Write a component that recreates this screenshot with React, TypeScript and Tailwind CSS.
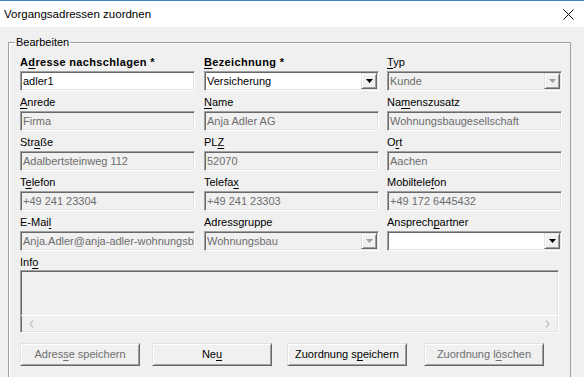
import React from 'react'

const sunken =
  'border border-t-[#a0a0a0] border-l-[#a0a0a0] border-r-white border-b-white shadow-[inset_1px_1px_0_#696969,inset_-1px_-1px_0_#e3e3e3]'
const raised =
  'border border-t-[#e3e3e3] border-l-[#e3e3e3] border-r-[#696969] border-b-[#696969] shadow-[inset_1px_1px_0_#ffffff,inset_-1px_-1px_0_#a0a0a0]'

type Label = { pre: string; acc?: string; post?: string; bold?: boolean }

function Caption({ pre, acc, post, bold }: Label) {
  return (
    <div className={`h-[13px] leading-[13px] whitespace-nowrap ${bold ? 'font-bold tracking-[0.35px]' : ''}`}>
      {pre}
      {acc && <span className="underline underline-offset-[2px]">{acc}</span>}
      {post}
    </div>
  )
}

function TextBox({ value, enabled }: { value: string; enabled?: boolean }) {
  return (
    <div
      className={`mt-[2px] h-[20px] w-[175px] ${sunken} flex items-center pl-[2px] overflow-hidden whitespace-nowrap ${
        enabled ? 'bg-white text-black' : 'bg-[#f0f0f0] text-[#6d6d6d]'
      }`}
    >
      {value}
    </div>
  )
}

function ComboBox({ value, enabled }: { value: string; enabled?: boolean }) {
  return (
    <div
      className={`mt-[2px] h-[20px] w-[175px] ${sunken} flex items-center pl-[2px] pr-[1px] ${
        enabled ? 'bg-white text-black' : 'bg-[#f0f0f0] text-[#6d6d6d]'
      }`}
    >
      <span className="flex-1 whitespace-nowrap overflow-hidden">{value}</span>
      <div className={`h-[16px] w-[16px] bg-[#f0f0f0] ${raised} flex items-center justify-center`}>
        <svg width="7" height="4" viewBox="0 0 7 4">
          <polygon points="0,0 7,0 3.5,4" fill={enabled ? '#000000' : '#a0a0a0'} />
        </svg>
      </div>
    </div>
  )
}

function Field({ label, children }: { label: Label; children: React.ReactNode }) {
  return (
    <div className="flex flex-col">
      <Caption {...label} />
      {children}
    </div>
  )
}

function Button({ pre, acc, post, enabled, className = '' }: { pre: string; acc: string; post: string; enabled?: boolean; className?: string }) {
  return (
    <div
      className={`h-[23px] w-[120px] bg-[#f0f0f0] ${raised} flex items-center justify-center whitespace-nowrap ${
        enabled ? 'text-black' : 'text-[#6d6d6d]'
      } ${className}`}
    >
      {pre}
      <span className="underline underline-offset-[2px]">{acc}</span>
      {post}
    </div>
  )
}

export default function App() {
  return (
    <div className="w-[584px] h-[377px] overflow-hidden bg-[#f0f0f0] font-['Liberation_Sans',Arial,sans-serif] text-[11px] text-black">
      {/* Title bar */}
      <div className="h-[27px] bg-white border-t border-[#3f84c8] flex items-center justify-between pl-[4px] pr-[10px]">
        <span className="text-[11.5px] pt-[1px]">Vorgangsadressen zuordnen</span>
        <svg width="11" height="11" viewBox="0 0 11 11">
          <path d="M0.5 0.5 L10.5 10.5 M10.5 0.5 L0.5 10.5" stroke="#000" strokeWidth="1" />
        </svg>
      </div>

      {/* Body */}
      <div className="pl-[8px] pt-[15px]">
        <div className="relative w-[563px] h-[400px] border border-[#a0a0a0] shadow-[inset_1px_1px_0_#ffffff] px-[11px] pt-[13px]">
          <span className="absolute left-[6px] top-[-7px] px-[1px] bg-[#f0f0f0] leading-[13px]">Bearbeiten</span>

          <div className="grid grid-cols-[184px_183px_175px] gap-y-[5px]">
            <Field label={{ pre: 'A', acc: 'd', post: 'resse nachschlagen *', bold: true }}>
              <TextBox value="adler1" enabled />
            </Field>
            <Field label={{ pre: '', acc: 'B', post: 'ezeichnung *', bold: true }}>
              <ComboBox value="Versicherung" enabled />
            </Field>
            <Field label={{ pre: '', acc: 'T', post: 'yp' }}>
              <ComboBox value="Kunde" />
            </Field>

            <Field label={{ pre: '', acc: 'A', post: 'nrede' }}>
              <TextBox value="Firma" />
            </Field>
            <Field label={{ pre: '', acc: 'N', post: 'ame' }}>
              <TextBox value="Anja Adler AG" />
            </Field>
            <Field label={{ pre: 'Na', acc: 'm', post: 'enszusatz' }}>
              <TextBox value="Wohnungsbaugesellschaft" />
            </Field>

            <Field label={{ pre: 'Str', acc: 'a', post: 'ße' }}>
              <TextBox value="Adalbertsteinweg 112" />
            </Field>
            <Field label={{ pre: 'PL', acc: 'Z' }}>
              <TextBox value="52070" />
            </Field>
            <Field label={{ pre: 'O', acc: 'r', post: 't' }}>
              <TextBox value="Aachen" />
            </Field>

            <Field label={{ pre: 'T', acc: 'e', post: 'lefon' }}>
              <TextBox value="+49 241 23304" />
            </Field>
            <Field label={{ pre: 'Telefa', acc: 'x' }}>
              <TextBox value="+49 241 23303" />
            </Field>
            <Field label={{ pre: 'Mobiltele', acc: 'f', post: 'on' }}>
              <TextBox value="+49 172 6445432" />
            </Field>

            <Field label={{ pre: 'E-Mai', acc: 'l' }}>
              <TextBox value="Anja.Adler@anja-adler-wohnungsbau.de" />
            </Field>
            <Field label={{ pre: 'Adressgruppe' }}>
              <ComboBox value="Wohnungsbau" />
            </Field>
            <Field label={{ pre: 'Ansprech', acc: 'p', post: 'artner' }}>
              <ComboBox value="" enabled />
            </Field>
          </div>

          {/* Info */}
          <div className="mt-[5px]">
            <Caption pre="Inf" acc="o" />
            <div className={`mt-[1px] h-[63px] w-[539px] ${sunken} flex flex-col`}>
              <div className="flex-1" />
              <div className="h-[17px] border-t border-white flex items-center justify-between px-[8px]">
                <svg width="5" height="8" viewBox="0 0 5 8">
                  <polyline points="4,0.5 1,4 4,7.5" fill="none" stroke="#c4c4c4" strokeWidth="1.3" />
                </svg>
                <svg width="5" height="8" viewBox="0 0 5 8">
                  <polyline points="1,0.5 4,4 1,7.5" fill="none" stroke="#c4c4c4" strokeWidth="1.3" />
                </svg>
              </div>
            </div>
          </div>

          {/* Buttons */}
          <div className="mt-[10px] flex">
            <Button pre="Adres" acc="s" post="e speichern" />
            <Button pre="Ne" acc="u" post="" enabled className="ml-[12px]" />
            <Button pre="Zuordnung s" acc="p" post="eichern" enabled className="ml-[15px]" />
            <Button pre="Zuordnung l" acc="ö" post="schen" className="ml-[17px]" />
          </div>
        </div>
      </div>
    </div>
  )
}
